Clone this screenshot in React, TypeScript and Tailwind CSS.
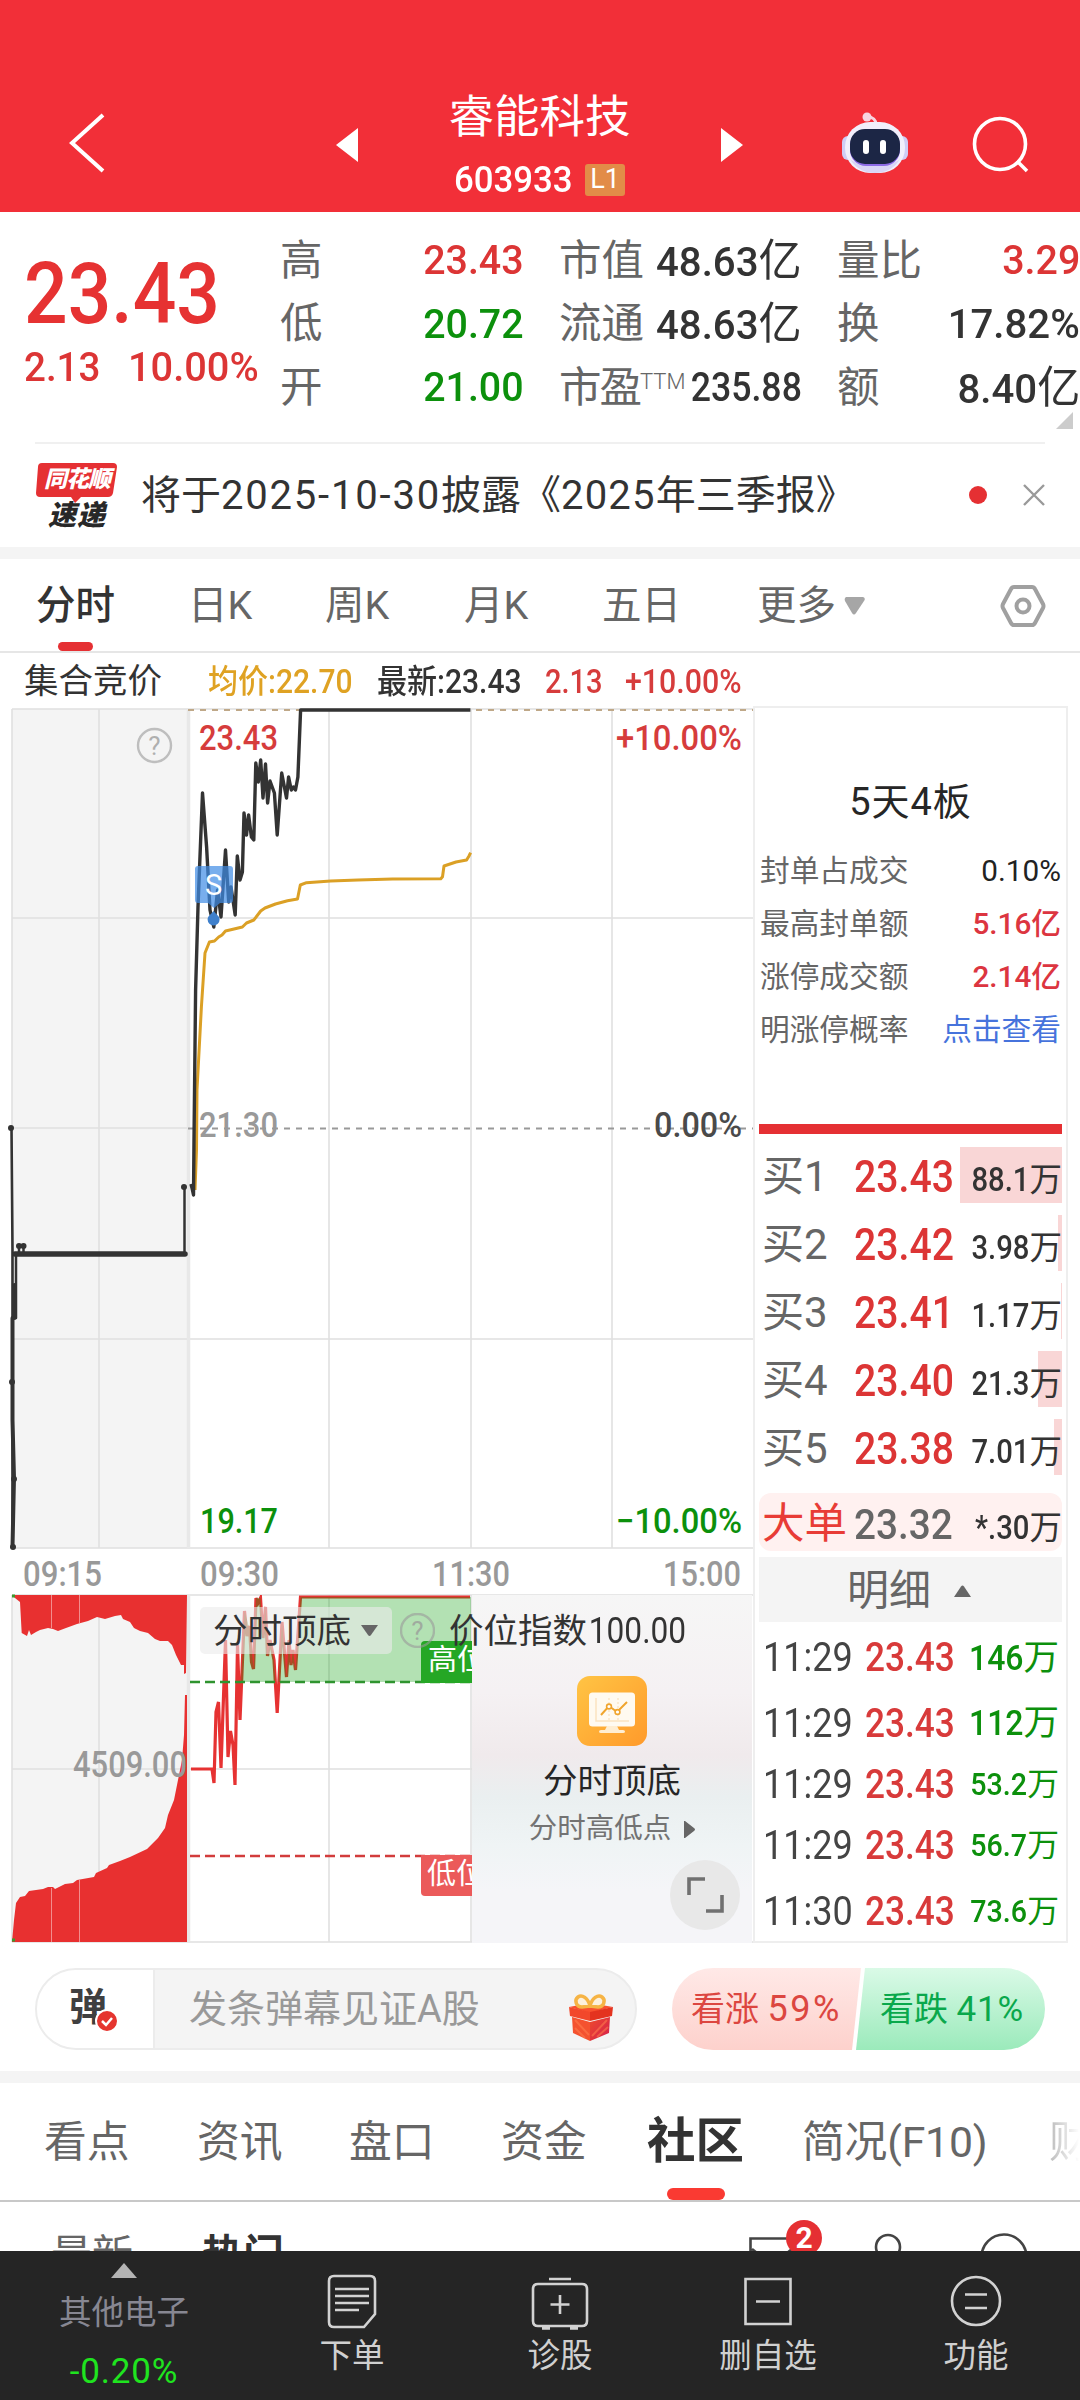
import type { ReactNode } from "react";
import { clsx } from "clsx";

const PRICE_LINE =
  "191,1184 192,1188 193.5,1195 194,1140 195.6,990 198,907 202.5,793 206.6,847 210,910 213.8,927 217.6,890 221,917 225.5,850 228.7,902 231,887 235.2,915 237.3,856 240,880 242.4,872 244,813 246.5,835 248.6,815 251.4,837 253.8,840 255.8,763 258.3,782 260.7,760 263,798 265.5,764 267.6,803 270,781 274.4,793 277.2,835 281.7,773 286.5,798 288.6,777 291.3,790 293.4,787 295.5,790 297.9,777 300.6,710 470.4,710";

const AVG_LINE =
  "195,1190 196.5,1150 197,1090 201.4,1007 205,953 209.4,942 214.5,941 218.7,937 222,935 225.5,931 234,929 242.4,927 246.5,923 253.8,920 260.7,911 265,908 275.5,904 287.5,900.7 297.5,899 300.3,885 306.5,882.7 330.6,881 358,880 392.5,879 440.8,878.7 442.5,876.7 444,866 456,862 466.6,860 469,856 470.6,852.7";

const INDEX_LINE =
  "191,1769 212,1769 214,1783 216,1712 218.5,1702 221,1768 225.5,1640 228,1757 230.5,1731 233,1745 235,1785 237.5,1645 240,1720 244.5,1611 247,1636 249.5,1626 251.5,1662 253.5,1669 256,1598 258,1603 260.5,1598 263,1638 265.5,1607 267.5,1656 270,1640 274,1660 277.2,1713 282,1622 286.5,1677 289,1640 291,1665 293,1650 295.5,1670 300.5,1597 470,1597";

const AUCTION_TOP =
  "12,1595 15,1598 20,1602 21.7,1633 27,1636 29,1630 31,1635 36,1632 40,1630 48,1628 53,1629 58,1631 66,1628 77,1624 88,1621 97,1617 105,1619 115,1616 121,1615 123,1619 130,1622 134,1628 140,1631 148,1633 155,1639 160,1641 168,1641 172,1645 176,1655 181,1665 184,1665 184,1674 186,1673 187,1595";

const AUCTION_BOTTOM =
  "12,1942 14,1920 16,1903 20,1897 25,1896 29,1891 43,1889 48,1887 53,1887 55,1889 65,1884 73,1883 77,1880 94,1877 96,1873 107,1868 109,1865 120,1861 130,1857 147,1849 158,1838 165,1828 168,1815 174,1800 178,1780 182,1760 184,1735 185,1695 187,1695 187,1942";

const buys = [
  { name: "买1", price: "23.43", vol: "88.1", bar: 102 },
  { name: "买2", price: "23.42", vol: "3.98", bar: 4 },
  { name: "买3", price: "23.41", vol: "1.17", bar: 1 },
  { name: "买4", price: "23.40", vol: "21.3", bar: 24 },
  { name: "买5", price: "23.38", vol: "7.01", bar: 8 },
];

const ticks = [
  { time: "11:29", vol: "146", big: true, row: "h-[67px]" },
  { time: "11:29", vol: "112", big: true, row: "h-[64px]" },
  { time: "11:29", vol: "53.2", big: false, row: "h-[59px]" },
  { time: "11:29", vol: "56.7", big: false, row: "h-[63px]" },
  { time: "11:30", vol: "73.6", big: false, row: "h-[68px]" },
];

const sealRows = [
  { label: "封单占成交", value: "0.10%", color: "text-[#222]" },
  { label: "最高封单额", value: "5.16亿", color: "text-[#dc3540] font-medium" },
  { label: "涨停成交额", value: "2.14亿", color: "text-[#dc3540] font-medium" },
  { label: "明涨停概率", value: "点击查看", color: "text-[#4673dc]" },
];

// digits are condensed horizontally; the class picks the anchor side
const Num = ({ children, className }: { children: ReactNode; className?: string }) => (
  <span className={clsx("inline-block whitespace-nowrap", className)}>{children}</span>
);

const Header = () => (
  <header className="flex h-[212px] items-end bg-[#f22f38] text-white">
    <div className="flex h-[134px] w-full items-center">
      <svg className="mb-[5px] ml-[66px] h-[64px] w-[42px]" viewBox="0 0 42 64" fill="none">
        <path d="M37 4 6 32l31 28" stroke="#fff" strokeWidth="4" />
      </svg>
      <svg className="ml-[228px] h-[34px] w-[22px]" viewBox="0 0 22 34">
        <path d="M22 0v34L0 17z" fill="#fff" />
      </svg>
      <div className="flex w-[363px] flex-col items-center">
        <h1 className="-mt-[2px] text-[45.500px] leading-[54px]">睿能科技</h1>
        <div className="mt-[17px] flex h-[36px] items-center">
          <Num className="w-[125px] origin-left scale-x-[.94] text-[37px] font-medium leading-none">603933</Num>
          <span className="ml-[6px] flex h-[32px] w-[40px] items-center justify-center rounded-[3px] bg-[#e28c48] text-[27px] leading-none">
            L1
          </span>
        </div>
      </div>
      <svg className="h-[34px] w-[22px]" viewBox="0 0 22 34">
        <path d="M0 0v34l22-17z" fill="#fff" />
      </svg>
      <svg className="ml-[97px] h-[66px] w-[70px]" viewBox="0 0 70 66">
        <circle cx="27" cy="5" r="4.500" fill="#f7d5e0" />
        <path d="M27 5c6 0 9 2 9 8" fill="none" stroke="#f7d5e0" strokeWidth="3" />
        <rect x="2" y="24" width="12" height="24" rx="6" fill="#cfcdf5" />
        <rect x="56" y="24" width="12" height="24" rx="6" fill="#cfcdf5" />
        <rect x="5" y="10" width="60" height="51" rx="25" fill="#f1effb" />
        <path d="M10 47c6 10 15 14 25 14s19-4 25-14c-8 8-42 8-50 0z" fill="#d9d5f6" />
        <rect x="10" y="18" width="50" height="36" rx="16" fill="#8d6be6" />
        <rect x="10" y="17" width="50" height="35" rx="15" fill="#1c2645" />
        <rect x="23" y="28" width="6" height="14" rx="3" fill="#fff" />
        <rect x="40" y="28" width="6" height="14" rx="3" fill="#fff" />
      </svg>
      <svg className="ml-[61px] h-[60px] w-[60px]" viewBox="0 0 60 60" fill="none" stroke="#fff" strokeWidth="3.6">
        <circle cx="29" cy="29" r="25.5" />
        <path d="m46 46 10 10" />
      </svg>
    </div>
  </header>
);

const QuoteCell = ({ label, value, unit, color = "text-[#333]", scale = "scale-x-[.96]" }: { label: ReactNode; value: string; unit?: string; color?: string; scale?: string }) => (
  <div className="flex h-[63.5px] items-center justify-between whitespace-nowrap text-[42.5px] leading-none">
    <span className="text-[#666]">{label}</span>
    <Num className={clsx("origin-right text-[41px] font-medium", scale, color)}>
      {value}
      {unit && <span className="text-[44px] font-normal leading-none">{unit}</span>}
    </Num>
  </div>
);

const Quote = () => (
  <section className="relative flex h-[230px] pt-[17px]">
    <div className="w-[256px] pl-[24px] text-[#dc3535]">
      <Num className="mt-[32px] origin-left scale-x-[.893] text-[86px] font-medium leading-[66px] text-[#e63232]">23.43</Num>
      <div className="mt-[17px] flex font-medium leading-[40px]">
        <Num className="w-[104px] shrink-0 origin-left scale-x-[.94] text-[41px]">2.13</Num>
        <Num className="origin-left scale-x-[.97] text-[41px]">10.00%</Num>
      </div>
    </div>
    <div className="ml-[24px] w-[244px]">
      <QuoteCell label="高" value="23.43" color="text-[#dc3535]" />
      <QuoteCell label="低" value="20.72" color="text-[#0c900c]" />
      <QuoteCell label="开" value="21.00" color="text-[#0c900c]" />
    </div>
    <div className="ml-[35px] w-[243px]">
      <QuoteCell label="市值" value="48.63" unit="亿" scale="scale-x-[.98]" />
      <QuoteCell label="流通" value="48.63" unit="亿" scale="scale-x-[.98]" />
      <QuoteCell
        label={
          <>
            <span className="tracking-[-2px]">市盈</span>
            <span className="relative -top-[13px] text-[22px] font-light">TTM</span>
          </>
        }
        value="235.88"
        scale="scale-x-[.87] -ml-[24px]"
      />
    </div>
    <div className="ml-[35px] w-[243px]">
      <QuoteCell label="量比" value="3.29" color="text-[#dc3535]" />
      <QuoteCell label="换" value="17.82%" scale="scale-x-[.98]" />
      <QuoteCell label="额" value="8.40" unit="亿" scale="scale-x-[.98]" />
    </div>
    <svg className="absolute bottom-[13px] right-[7px] h-[17px] w-[17px]" viewBox="0 0 17 17">
      <path d="M17 0v17H0z" fill="#ccc" />
    </svg>
  </section>
);

const Notice = () => (
  <section className="mx-[35px] flex h-[105px] items-center border-t-2 border-[#f0f0f0]">
    <div className="relative h-[68px] w-[84px]">
      <svg className="absolute inset-0 h-full w-full" viewBox="0 0 84 68">
        <path d="M7 1h71q4 0 4 4l-4 26q-1 4-5 4H46l-6 6-4-6H5q-4 0-4-4L3 5q0-4 4-4z" fill="#e53033" />
      </svg>
      <div className="relative flex flex-col items-center italic leading-none">
        <b className="mt-[6px] text-[23px] font-black tracking-[-1px] text-white">同花顺</b>
        <b className="mt-[11px] text-[28px] font-black tracking-[1px] text-[#282828]">速递</b>
      </div>
    </div>
    <p className="ml-[22px] w-[828px] whitespace-nowrap text-[40px] leading-none text-[#333]">
      将于<span className="tracking-[1.800px]">2025-10-30</span>披露《<span className="tracking-[1.200px]">2025</span>年三季报》
    </p>
    <span className="mb-[2px] h-[18px] w-[18px] rounded-full bg-[#e53033]" />
    <svg className="mb-[2px] ml-auto h-[22px] w-[22px]" viewBox="0 0 22 22">
      <path d="m1 1 20 20M21 1 1 21" stroke="#999" strokeWidth="2.4" />
    </svg>
  </section>
);

const PeriodTabs = () => (
  <nav className="flex h-[94px] items-center border-b-2 border-[#e6e6e6] pl-[36px] text-[39.5px] leading-none text-[#666] *:pt-[2px]">
    <div className="relative flex h-full w-[152px] items-center font-medium text-[#333]">
      分时
      <i className="absolute bottom-0 left-[22px] h-[9px] w-[35px] rounded-[5px] bg-[#e53033]" />
    </div>
    <span className="w-[137px]">日K</span>
    <span className="w-[139px]">周K</span>
    <span className="w-[138px]">月K</span>
    <span className="w-[155px]">五日</span>
    <span>更多</span>
    <svg className="ml-[8px] h-[20px] w-[21px]" viewBox="0 0 21 18">
      <path d="M2 0h17q3 1 1 4l-8 12q-2 3-4 0L1 4Q0 1 2 0z" fill="#a6a6a6" />
    </svg>
    <svg className="ml-auto mr-[34px] h-[46px] w-[46px]" viewBox="0 0 46 44" fill="none" stroke="#a0a0a0" strokeWidth="4">
      <path d="M14 3h18q2 0 3 2l8 15q1 2 0 4l-8 15q-1 2-3 2H14q-2 0-3-2L3 24q-1-2 0-4l8-15q1-2 3-2z" />
      <circle cx="23" cy="22" r="6.5" />
    </svg>
  </nav>
);

const InfoRow = () => (
  <div className="flex h-[54px] items-center pl-[24px] pt-[2px] text-[33px] leading-none text-[#333]">
    <span className="w-[184px] text-[34.5px]">集合竞价</span>
    <Num className="w-[169px] origin-left scale-x-[.91] font-medium text-[#dfa223]">均价:22.70</Num>
    <Num className="w-[168px] origin-left scale-x-[.91] font-medium">最新:23.43</Num>
    <Num className="w-[80px] origin-left scale-x-[.88] font-medium text-[#d63c3c]">2.13</Num>
    <Num className="origin-left scale-x-[.92] font-medium text-[#d63c3c]">+10.00%</Num>
  </div>
);

const Label = ({ x, y, w, fill, size = 35, children }: { x: number; y: number; w: number; fill: string; size?: number; children: string }) => (
  <text x={x} y={y} textLength={w} lengthAdjust="spacingAndGlyphs" fill={fill} fontSize={size} fontWeight="500">
    {children}
  </text>
);

const HelpMark = ({ x, y }: { x: number; y: number }) => (
  <g>
    <circle cx={x} cy={y} r="16.500" fill="none" stroke="#999" strokeOpacity=".6" strokeWidth="2.4" />
    <text x={x} y={y + 9} textAnchor="middle" fontSize="26" fill="#999" fillOpacity=".75">?</text>
  </g>
);

const Charts = () => (
  <svg className="block h-[1237px] w-[753px]" viewBox="0 706 753 1237">
    <defs>
      <clipPath id="highZone">
        <rect x="188" y="1595" width="284" height="87" />
      </clipPath>
      <clipPath id="session">
        <rect x="0" y="1595" width="472" height="350" />
      </clipPath>
    </defs>

    {/* price chart */}
    <path d="M12 709h176v839H12zM12 1595h176v347H12z" fill="#f4f4f4" />
    <g stroke="#e0e0e0" strokeWidth="1.6" fill="none">
      <path d="M12 709H753M12 918H753M12 1128H188M12 1339H753M12 1548H753M12 1595H753M12 1769H472M12 1942H753" />
      <path d="M12 709V1548M99 709V1548M329 709V1548M471 709V1548M612 709V1548M12 1595V1942M99 1595V1942M329 1595V1942M471 1595V1942" />
    </g>
    <path d="M188.500 709V1548M188.500 1595V1942" stroke="#e8e8e8" strokeWidth="3.500" />
    <path d="M188 710H753" stroke="#bfa888" strokeWidth="2" strokeDasharray="6 6" />
    <path d="M188 1128.500H753" stroke="#999" strokeWidth="2" strokeDasharray="6 6" />

    <g stroke="#333" fill="none" strokeLinejoin="round" strokeLinecap="round">
      <path d="M11.500 1128 12.500 1250V1547" strokeWidth="2.600" />
      <path d="M14.500 1285V1318M12.500 1318V1420L14 1478 12.500 1547" strokeWidth="4" />
      <path d="M16 1318V1254M19 1254V1246M23.500 1254V1246" strokeWidth="2.500" />
      <path d="M15 1254H185" strokeWidth="5.500" />
      <path d="M184.500 1254V1187" strokeWidth="2.500" />
    </g>
    <g fill="#333">
      <circle cx="11" cy="1128" r="3" />
      <circle cx="19" cy="1246" r="3" />
      <circle cx="23.500" cy="1246" r="3" />
      <circle cx="12" cy="1382" r="3" />
      <circle cx="14" cy="1479" r="3" />
      <circle cx="13" cy="1547" r="3" />
      <circle cx="184" cy="1187" r="3" />
    </g>
    <polyline points={AVG_LINE} fill="none" stroke="#dba025" strokeWidth="3" strokeLinejoin="round" />
    <polyline points={PRICE_LINE} fill="none" stroke="#333" strokeWidth="3.400" strokeLinejoin="round" />

    <path d="M198 866h32q3 0 3 3v31q0 3-3 3h-10l-6 5-6-5h-10q-3 0-3-3v-31q0-3 3-3z" fill="#3f8be6" fillOpacity=".7" />
    <path d="M213.600 911c3 4 6 5 6 8.500a6 6 0 0 1-12 0c0-3.500 3-4.500 6-8.500z" fill="#3f80cc" />
    <text x="213.500" y="895" textAnchor="middle" fontSize="29" fill="#fff">S</text>
    <HelpMark x={154.5} y={745.500} />

    <Label x={199} y={750} w={79} fill="#d63c3c">23.43</Label>
    <Label x={616} y={750} w={126} fill="#d63c3c">+10.00%</Label>
    <Label x={199} y={1137} w={79} fill="#999">21.30</Label>
    <Label x={654} y={1137} w={88} fill="#4a4a4a">0.00%</Label>
    <Label x={200} y={1533} w={78} fill="#0c900c">19.17</Label>
    <Label x={616} y={1533} w={126} fill="#0c900c">−10.00%</Label>
    <Label x={23} y={1586} w={79} fill="#999">09:15</Label>
    <Label x={200} y={1586} w={79} fill="#999">09:30</Label>
    <Label x={432} y={1586} w={78} fill="#999">11:30</Label>
    <Label x={663} y={1586} w={78} fill="#999">15:00</Label>

    {/* auction volume */}
    <path d={`M${AUCTION_TOP}z`} fill="#e83030" />
    <path d={`M${AUCTION_BOTTOM}z`} fill="#e83030" />
    <path d="M51.500 1595V1628M79.500 1595V1623M51.500 1888V1942M79.500 1880V1942" stroke="#fff" strokeOpacity=".45" />
    <path d="M12 1596h3M12 1940h3" stroke="#3c9a2c" strokeWidth="3" />
    <Label x={73} y={1777} w={114} fill="#999" size={36}>4509.00</Label>

    {/* index line with its high and low zones */}
    <g clipPath="url(#session)">
      <polyline points={INDEX_LINE} fill="none" stroke="#e63232" strokeWidth="3.200" />
      <path d="M241 1682 244.500 1611 250 1630 253.500 1669 256 1598 260.500 1598 263 1638 265.500 1607 267.500 1656 270 1640 274 1660 275.500 1682zM278.500 1682 282 1622 286.500 1677 289 1640 291 1665 293 1650 295.500 1670 300.500 1597H471V1682z" fill="#029b02" fillOpacity=".3" clipPath="url(#highZone)" />
      <path d="M190 1682H471" stroke="#2f942f" strokeWidth="2.600" strokeDasharray="10 5" />
      <path d="M190 1856H471" stroke="#d23c3c" strokeWidth="2.600" strokeDasharray="10 5" />
      <path d="M425 1641h50v42h-54v-38q0-4 4-4z" fill="#25a725" />
      <path d="M421 1855h54v41h-50q-4 0-4-4z" fill="#eb5a5a" />
      <text x="428" y="1670" fontSize="29" fill="#fff">高位</text>
      <text x="427" y="1884" fontSize="29" fill="#fff">低位</text>
    </g>
  </svg>
);

const ToolCard = () => (
  <div className="absolute bottom-0 left-[472px] flex h-[348px] w-[280px] flex-col items-center bg-[linear-gradient(180deg,#f6f6f6_0%,#f5f1f3_28%,#f0eaec_46%,#eaeff0_58%,#eff4f5_72%,#f5f5f8_85%)]">
    <svg className="mt-[81px] h-[70px] w-[70px]" viewBox="0 0 70 70">
      <defs>
        <linearGradient id="toolBg" x1="0" y1="0" x2="1" y2="1">
          <stop offset="0" stopColor="#ffc444" />
          <stop offset="1" stopColor="#ff9a2b" />
        </linearGradient>
      </defs>
      <rect width="70" height="70" rx="13" fill="url(#toolBg)" />
      <rect x="12" y="16.500" width="46" height="34" rx="3.500" fill="#fffaf0" />
      <path d="M30 50h10l2 4h4q2 0 2 1.500T46 57H24q-2 0-2-1.500t2-1.500h4z" fill="#ffeed2" />
      <path d="M19 22v23h33" fill="none" stroke="#fbe3c0" strokeWidth="1.500" />
      <path d="M32 22v22M41 22v22" stroke="#f7dcb4" strokeDasharray="2 2" />
      <path d="m24 39 8-9 8 6 10-10" fill="none" stroke="#f0a52e" strokeWidth="2" />
      <circle cx="32" cy="30.500" r="2.400" fill="#fff" stroke="#f0a52e" strokeWidth="1.600" />
      <circle cx="40.500" cy="36" r="2.400" fill="#fff" stroke="#f0a52e" strokeWidth="1.600" />
    </svg>
    <span className="mt-[17px] text-[34.5px] leading-[36px] text-[#262626]">分时顶底</span>
    <span className="mt-[14px] flex items-center gap-[13px] text-[28.5px] leading-[32px] text-[#737373]">
      分时高低点
      <svg className="h-[17px] w-[11px]" viewBox="0 0 11 17">
        <path d="M1 0 10 7q2 1.500 0 3L1 17H0V0z" fill="#666" />
      </svg>
    </span>
    <div className="absolute bottom-[13px] right-[12px] flex h-[70px] w-[70px] items-center justify-center rounded-full bg-[#e8e8e8]">
      <svg className="h-[36px] w-[37px]" viewBox="0 0 37 36" fill="none" stroke="#707070" strokeWidth="3.600">
        <path d="M2 18V2h16M35 18v16H19" />
      </svg>
    </div>
  </div>
);

const IndexBar = () => (
  <div className="absolute left-[200px] top-[901px] flex h-[47px] items-center text-[34.5px] leading-none text-[#333]">
    <div className="flex h-full w-[192px] items-center rounded-[5px] bg-[#ebebeb]/60 pl-[13px] pt-[1px]">
      分时顶底
      <svg className="ml-[10px] h-[12px] w-[17px]" viewBox="0 0 17 12">
        <path d="M0 0h17l-7 10q-1.500 2-3 0z" fill="#666" />
      </svg>
    </div>
    <svg className="ml-[8px] h-[35px] w-[35px]" viewBox="0 0 35 35">
      <HelpMark x={17.5} y={17.5} />
    </svg>
    <span className="ml-[14px] pt-[1px]">价位指数</span>
    <Num className="origin-left scale-x-[.88] pl-[2px] pt-[1px] text-[36px]">100.00</Num>
  </div>
);

const Volume = ({ value, className }: { value: string; className?: string }) => (
  <span className={clsx("flex items-center", className)}>
    <Num className="-ml-[24px] origin-right scale-x-[.9] font-medium">{value}</Num>
    <span>万</span>
  </span>
);

const OrderBook = () => (
  <aside className="h-[1237px] w-[315px] border-2 border-[#eeeeee] px-[4px]">
    <h2 className="mt-[75px] text-center text-[38px] leading-[38px] tracking-[1px] text-[#262626]">5天4板</h2>
    <div className="mt-[23px]">
      {sealRows.map((r) => (
        <div key={r.label} className="flex h-[53.2px] items-center justify-between text-[29.7px] leading-none">
          <span className="pl-[1px] text-[#666]">{r.label}</span>
          <span className={clsx("pr-[1px] text-[29.700px]", r.color)}>{r.value}</span>
        </div>
      ))}
    </div>
    <div className="mt-[67px] h-[10px] bg-[#e53033]" />
    <div className="mt-[13px] flex flex-col gap-[12px]">
      {buys.map((b) => (
        <div key={b.name} className="relative flex h-[56px] items-center pl-[3px] pt-[5px] leading-none">
          <i className="absolute right-0 top-0 h-full bg-[#f9d6d6]" style={{ width: b.bar }} />
          <span className="relative w-[92px] text-[42px] text-[#666]">{b.name}</span>
          <Num className="relative origin-left scale-x-[.9] text-[43.5px] font-medium text-[#dc3535]">{b.price}</Num>
          <Volume value={b.vol} className="absolute right-0 top-[17px] text-[32.500px] text-[#333]" />
        </div>
      ))}
    </div>
    <div className="relative mt-[18px] flex h-[58px] items-center rounded-[12px] bg-[#fff1f0] pl-[3px] pt-[5px] leading-none">
      <span className="w-[92px] text-[42.500px] text-[#e83c36]">大单</span>
      <Num className="origin-left scale-x-[.9] text-[43px] font-medium text-[#666]">23.32</Num>
      <Volume value="*.30" className="absolute right-0 top-[19px] text-[32.500px] text-[#333]" />
    </div>
    <div className="mt-[6px] flex h-[65px] items-center bg-[#f4f4f4] pl-[88px] pt-[4px] text-[42px] leading-none text-[#666]">
      明细
      <svg className="ml-[23px] h-[12px] w-[17px]" viewBox="0 0 17 12">
        <path d="M0 12h17L10 1.500q-1.500-2-3 0z" fill="#666" />
      </svg>
    </div>
    {ticks.map((t, i) => (
      <div key={i} className={clsx("flex items-center pl-[4px] pt-[6px] leading-none", t.row)}>
        <Num className="w-[102px] shrink-0 origin-left scale-x-[.9] text-[40px] text-[#444]">{t.time}</Num>
        <Num className="origin-left scale-x-[.88] text-[40px] font-medium text-[#d83a3a]">23.43</Num>
        <Volume value={t.vol} className={clsx("ml-auto pr-[3px] text-[#0c900c]", t.big ? "text-[35.500px]" : "text-[31.800px]")} />
      </div>
    ))}
  </aside>
);

const Danmu = () => (
  <section className="flex h-[128px] items-center justify-between px-[35px] pt-[3px] leading-none">
    <div className="flex h-[82px] w-[602px] items-center overflow-hidden rounded-full border-2 border-[#ececec] bg-[#f4f4f4]">
      <div className="relative flex h-full w-[118px] items-center border-r-2 border-[#ececec] bg-white pb-[4px] pl-[32px] text-[38px] font-bold text-[#404040]">
        弹
        <svg className="absolute left-[58px] top-[39px] h-[24px] w-[24px]" viewBox="0 0 24 24">
          <circle cx="12" cy="12" r="11" fill="#e5352f" stroke="#fff" strokeWidth="2" />
          <path d="m7 12 4 4 6-7" fill="none" stroke="#fff" strokeWidth="2.500" />
        </svg>
      </div>
      <span className="ml-[34px] text-[38px] text-[#999]">发条弹幕见证A股</span>
      <svg className="ml-auto mr-[20px] mt-[16px] h-[50px] w-[48px]" viewBox="0 0 48 50">
        <defs>
          <linearGradient id="giftSide" x2="1" y2="1">
            <stop stopColor="#ee4a2c" />
            <stop offset="1" stopColor="#d41f4e" />
          </linearGradient>
        </defs>
        <path d="M2 15 23 11l23 4-23 6z" fill="#f9502f" />
        <path d="m2 15 21 5v9L3 24z" fill="#f2482b" />
        <path d="m46 15-23 5v9l22-5z" fill="#e4331f" />
        <path d="m5 25 18 5v19L6 41z" fill="#f4522f" />
        <path d="m43 25-20 5v19l19-8z" fill="url(#giftSide)" />
        <path d="m8 28 14 15M8 36l10 10M40 28 25 44M41 35l-11 10" stroke="#ff7d4d" strokeOpacity=".55" strokeWidth="2" />
        <path d="M23 14c-2-8-8-12-12-9s-2 10 4 10zM23 14c2-8 8-12 12-9s2 10-4 10z" fill="#fdf1dc" stroke="#f6b445" strokeWidth="3.500" strokeLinejoin="round" />
      </svg>
    </div>
    <div className="relative flex h-[82px] w-[373px] items-center overflow-hidden rounded-full text-[34px]">
      <svg className="absolute inset-0 h-full w-full" viewBox="0 0 373 82">
        <defs>
          <linearGradient id="up" x2="0" y2="1">
            <stop stopColor="#ffe9e7" />
            <stop offset="1" stopColor="#fdd1cc" />
          </linearGradient>
          <linearGradient id="down" x2="0" y2="1">
            <stop stopColor="#dafae7" />
            <stop offset="1" stopColor="#9beabb" />
          </linearGradient>
        </defs>
        <path d="M0 0h189l-9 82H0z" fill="url(#up)" />
        <path d="M193 0h180v82H184z" fill="url(#down)" />
      </svg>
      <span className="relative w-[190px] whitespace-nowrap pl-[19px] pt-[1px] text-[#dc4640]">
        看涨 <span className="text-[36px] tracking-[2.500px]">59%</span>
      </span>
      <span className="relative whitespace-nowrap pl-[18px] pt-[1px] text-[#0aa84c]">
        看跌 <span className="text-[35px] tracking-[0.8px]">41%</span>
      </span>
    </div>
  </section>
);

const SectionTabs = () => (
  <nav className="flex h-[119px] items-center overflow-hidden whitespace-nowrap border-b-2 border-[#c8c8c8] pl-[44px] text-[42.800px] leading-none text-[#666] *:shrink-0 *:pt-[2px]">
    <span className="w-[153px]">看点</span>
    <span className="w-[152px]">资讯</span>
    <span className="w-[152px]">盘口</span>
    <span className="w-[146px]">资金</span>
    <div className="relative flex h-full w-[155px] items-center text-[48.500px] font-bold text-[#333]">
      社区
      <i className="absolute bottom-0 left-[20px] h-[12px] w-[58px] rounded-[6px] bg-[#fa3a32]" />
    </div>
    <span className="w-[247px] tracking-[-0.2px]">简况(F10)</span>
    <span className="bg-linear-to-r from-[#bbb] to-white to-70% bg-clip-text text-transparent">财</span>
  </nav>
);

const FeedBar = () => (
  <div className="flex h-[49px] items-start overflow-hidden pl-[51px] pt-[28px] text-[41px] leading-[50px] text-[#666]">
    <span className="w-[151px]">最新</span>
    <span className="font-bold text-[#333]">热门</span>
    <div className="relative ml-auto flex h-[60px] w-[331px]">
      <svg className="h-[60px] w-full" viewBox="0 0 331 60" fill="none" stroke="#444" strokeWidth="2.600">
        <path d="M1.500 40V8.500h42V40M3 19l20 16 20-16" />
        <circle cx="139" cy="17" r="12" />
        <circle cx="255" cy="27" r="22.500" />
      </svg>
      <b className="absolute -top-[10px] left-[37px] flex h-[36px] w-[36px] items-center justify-center rounded-full bg-[#e53033] text-[30px] leading-none text-white">2</b>
    </div>
  </div>
);

const NavItem = ({ label, children, width }: { label: string; children: ReactNode; width: string }) => (
  <div className={clsx("flex flex-col items-center pt-[20px]", width)}>
    <svg className="h-[60px] w-[60px]" viewBox="0 0 60 60" fill="none" stroke="#d2d2d2" strokeWidth="2.600">
      {children}
    </svg>
    <span className="mt-[8px] text-[32.500px] leading-[34px] text-[#d0d0d0]">{label}</span>
  </div>
);

const BottomNav = () => (
  <footer className="flex h-[149px] bg-[#252525]">
    <div className="flex w-[248px] flex-col items-center leading-none">
      <svg className="mt-[12px] h-[15px] w-[26px]" viewBox="0 0 26 15">
        <path d="M13 0 26 15H0z" fill="#b4b4b4" />
      </svg>
      <span className="mt-[19px] text-[32.500px] text-[#878792]">其他电子</span>
      <span className="mt-[24px] text-[35px] tracking-[0.8px] text-[#1fe41f]">-0.20%</span>
    </div>
    <NavItem label="下单" width="w-[208px]">
      <path d="M12 5h36q5 0 5 5v33L42 56H12q-5 0-5-5V10q0-5 5-5z" />
      <path d="M13 18h34M13 25h34M13 32h34M13 39h24" />
    </NavItem>
    <NavItem label="诊股" width="w-[208px]">
      <path d="M8 13h44q5 0 5 5v32q0 5-5 5H8q-5 0-5-5V18q0-5 5-5zM19 8h22M30 24v19M20.500 33.500h19M12 57.500h8M40 57.500h8" />
    </NavItem>
    <NavItem label="删自选" width="w-[208px]">
      <path d="M7.500 8h45v45h-45zM18 30.500h24" />
    </NavItem>
    <NavItem label="功能" width="w-[208px]">
      <circle cx="30" cy="30" r="24" />
      <path d="M19 23.500h22M19 37h22" />
    </NavItem>
  </footer>
);

export default function App() {
  return (
    <div className="h-[2400px] w-[1080px] overflow-hidden bg-white font-[Roboto,'Noto_Sans_CJK_SC',sans-serif]">
      <Header />
      <Quote />
      <Notice />
      <div className="h-[12px] bg-[#f4f4f4]" />
      <PeriodTabs />
      <InfoRow />
      <main className="relative mt-[-1px] flex">
        <Charts />
        <ToolCard />
        <IndexBar />
        <OrderBook />
      </main>
      <Danmu />
      <div className="h-[12px] bg-[#f4f4f4]" />
      <SectionTabs />
      <FeedBar />
      <BottomNav />
    </div>
  );
}
